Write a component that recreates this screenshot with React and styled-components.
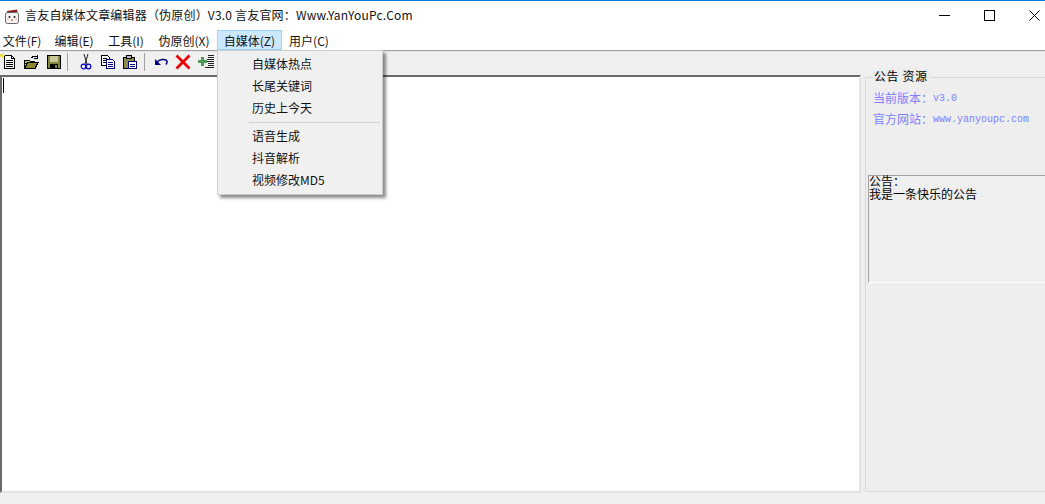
import React from "react";
import styled, { createGlobalStyle } from "styled-components";

const Global = createGlobalStyle`
  html, body { margin: 0; padding: 0; background: #f0f0f0; overflow: hidden; }
  * { box-sizing: border-box; }
`;
const CJK = `"Noto Sans CJK SC", "Noto Sans", sans-serif`;

const Win = styled.div`
  position: relative; width: 1045px; height: 504px; display: flex; flex-direction: column;
  background: #f0f0f0; overflow: hidden; font-family: ${CJK}; font-size: 12px; color: #111;
`;
const TitleBar = styled.div`
  height: 30px; flex: none; background: #fff; border-top: 1px solid #0078d7;
  display: flex; align-items: center; padding-left: 4px;
`;
const AppLogo = styled.svg` width: 16px; height: 16px; flex: none; margin-right: 5px; `;
const TitleText = styled.div` flex: 1; font-size: 12px; line-height: 16px; letter-spacing: 0.19px; white-space: nowrap; margin-top: -2px; `;
const WinButtons = styled.div` display: flex; align-self: stretch; gap: 24px; `;
const WinBtn = styled.div` width: 21px; display: flex; align-items: center; justify-content: center; `;

const MenuBar = styled.div`
  height: 20px; flex: none; background: #fff; display: flex; align-items: stretch; padding-left: 3px;
`;
const MenuItem = styled.div`
  display: flex; align-items: center; justify-content: center; white-space: nowrap; font-size: 12px;
  width: ${p => p.$w}px; margin-left: ${p => p.$ml || 0}px;
  border: 1px solid ${p => (p.$active ? "#99d1ff" : "transparent")};
  background: ${p => (p.$active ? "#cce8ff" : "transparent")};
`;
const Rule = styled.div` height: 2px; flex: none; background: linear-gradient(#a0a0a0 0 1px, #e3e3e3 1px); `;

const Toolbar = styled.div`
  height: 23px; flex: none; display: flex; align-items: center; padding-bottom: 3px; background: #f0f0f0;
`;
const Tool = styled.svg` width: 16px; height: 16px; flex: none; margin-right: ${p => p.$mr ?? 7}px; `;
const Sep = styled.div`
  width: 1px; height: 18px; background: #a0a0a0; flex: none; margin-right: ${p => p.$mr}px;
`;

const Body = styled.div` flex: 1; display: flex; min-height: 0; `;
const Editor = styled.div`
  width: 861px; height: 418px; flex: none; background: #fff; position: relative;
  border-top: 2px solid #696969; border-left: 2px solid #696969;
  border-right: 2px solid #e3e3e3; border-bottom: 2px solid #e3e3e3;
  padding: 1px 0 0 1px;
`;
const Caret = styled.div` width: 1px; height: 15px; background: #000; `;

const Panel = styled.div` flex: 1; padding: 2px 0 0 4px; background: #eee; height: 417px; `;
const Group = styled.div`
  position: relative; height: 415px; margin-right: -4px; background: #eeeeee;
  border: 1px solid #d9d9d9; padding: 9px 0 0 7px;
`;
const Legend = styled.div`
  position: absolute; top: -10px; left: 6px; padding: 0 2px; background: #eee; color: #000;
  font-size: 12px; line-height: 16px; letter-spacing: 0.6px; white-space: nowrap;
`;
const InfoRow = styled.div`
  height: 21px; display: flex; align-items: center; color: #8080ff; white-space: nowrap;
`;
const Mono = styled.span` font-family: "Liberation Mono", monospace; font-size: 10px; position: relative; top: 1px; `;
const Notice = styled.div`
  margin: 46px 0 0 -5px; height: 108px; font-size: 12px; color: #000;
  border-top: 1px solid #a0a0a0; border-left: 1px solid #a0a0a0;
  border-bottom: 1px solid #fff; background: #efefef;
`;
const NoticeText = styled.div` margin-top: -2px; line-height: 13px; `;

const Dropdown = styled.div`
  position: absolute; left: 217px; top: 50px; width: 166px; height: 145px; padding: 2px;
  background: #f0f0f0; border: 1px solid #ccc; box-shadow: 3px 3px 3px rgba(0,0,0,.45);
`;
const DropItem = styled.div` height: 22px; padding-left: 32px; line-height: 22px; color: #111; font-size: 12px; white-space: nowrap; `;
const DropSep = styled.div` height: 1px; background: #d2d2d2; margin: 3px 0 2px 29px; `;

const Logo = () => (
  <AppLogo viewBox="0 0 16 16">
    <path d="M3 3 L13 1.5 L13.5 4 L3.5 5 Z" fill="#8e1f1f" />
    <rect x="1.5" y="4.5" width="13" height="11" rx="2" fill="#f8f2f2" stroke="#444" strokeWidth=".8" />
    <circle cx="5.5" cy="9" r="1" fill="#222" /><circle cx="10.5" cy="9" r="1" fill="#222" />
    <circle cx="3.8" cy="11" r="1" fill="#f5b5c0" /><circle cx="12.2" cy="11" r="1" fill="#f5b5c0" />
    <path d="M7 12h2" stroke="#c33" />
  </AppLogo>
);

const IconNew = () => (
  <Tool viewBox="0 0 16 16" $mr={7} shapeRendering="crispEdges">
    <path d="M4.5 1.5h7l3 3v10h-10z" fill="#fff" stroke="#000" />
    <path d="M11.5 1.5v3h3M6 6.5h7M6 8.5h7M6 10.5h7M6 12.5h7" fill="none" stroke="#000" />
    <path d="M0 1.5h5M2.5 0v4M0 0l4 3M0 3l4-3" stroke="#e8e04a" />
  </Tool>
);
const IconOpen = () => (
  <Tool viewBox="0 0 16 16" $mr={7} shapeRendering="crispEdges">
    <path d="M1.5 6.5h5l1 1h4v2h-10zM1.5 14.5v-8" fill="#c8b850" stroke="#000" />
    <path d="M1.5 14.5l3-6h10.5l-3 6z" fill="#8d8a2c" stroke="#000" />
    <path d="M8.5 4.5c1-3 4-3 5.5-1.5M14.5 1v3.5h-3.5" fill="none" stroke="#000" />
  </Tool>
);
const IconSave = () => (
  <Tool viewBox="0 0 16 16" $mr={5} shapeRendering="crispEdges">
    <rect x="1" y="1" width="14" height="14" fill="#000" />
    <rect x="2" y="2" width="12" height="12" fill="#85853c" />
    <rect x="4" y="2" width="8" height="6" fill="#c8c89a" />
    <rect x="4" y="10" width="8" height="5" fill="#000" />
    <rect x="9" y="11" width="2" height="3" fill="#85853c" />
  </Tool>
);
const IconCut = () => (
  <Tool viewBox="0 0 16 16" $mr={6}>
    <path d="M6 0l3 10M10 0L7 10" stroke="#222" strokeWidth="1" fill="none" />
    <circle cx="5.5" cy="12.5" r="2.3" fill="none" stroke="#0000c8" strokeWidth="1.2" />
    <circle cx="10.5" cy="12.5" r="2.3" fill="none" stroke="#0000c8" strokeWidth="1.2" />
  </Tool>
);
const IconCopy = () => (
  <Tool viewBox="0 0 16 16" $mr={6} shapeRendering="crispEdges">
    <path d="M1.5 1.5h6l2 2v8h-8z" fill="#fff" stroke="#000" />
    <path d="M3 4.5h4M3 6.5h4M3 8.5h4" stroke="#000" />
    <path d="M6.5 5.5h6l2 2v7h-8z" fill="#fff" stroke="#000080" />
    <path d="M8 8.5h5M8 10.5h5M8 12.5h5" stroke="#000080" />
  </Tool>
);
const IconPaste = () => (
  <Tool viewBox="0 0 16 16" $mr={6} shapeRendering="crispEdges">
    <path d="M1.5 3.5h11v11h-11z" fill="#8f8a4e" stroke="#000" />
    <path d="M4.5 1.5h5v3h-5z" fill="#bbb" stroke="#000" />
    <path d="M6.5 7.5h8v7h-8z" fill="#fff" stroke="#000080" />
    <path d="M8 10.5h5M8 12.5h5" stroke="#000080" />
  </Tool>
);
const IconUndo = () => (
  <Tool viewBox="0 0 16 16" $mr={6}>
    <path d="M2 5v6h6z" fill="#000080" />
    <path d="M4 8c3-3 7-3 9-2 1.5 1 1 3 0 4.5" fill="none" stroke="#000080" strokeWidth="1.5" />
  </Tool>
);
const IconDelete = () => (
  <Tool viewBox="0 0 16 16" $mr={7}>
    <path d="M1.5 1.5l13 13M14.5 1.5l-13 13" stroke="#e80000" strokeWidth="2.8" />
  </Tool>
);
const IconAdd = () => (
  <Tool viewBox="0 0 16 16" $mr={0} shapeRendering="crispEdges">
    <path d="M3 3h3v3h3v3H6v3H3V9H0V6h3z" fill="#4f9a5a" />
    <path d="M10 1.5h6M10 3.5h6M9 5.5h7M9 7.5h7M10 9.5h6M10 11.5h6M7 13.5h9" stroke="#222" />
  </Tool>
);

export default function App() {
  return (
    <Win>
      <Global />
      <TitleBar>
        <Logo />
        <TitleText>言友自媒体文章编辑器（伪原创）V3.0 言友官网：Www.YanYouPc.Com</TitleText>
        <WinButtons>
          <WinBtn>
            <svg width="11" height="11" viewBox="0 0 11 11"><path d="M0 5.5h11" stroke="#000" /></svg>
          </WinBtn>
          <WinBtn>
            <svg width="11" height="11" viewBox="0 0 11 11"><rect x=".5" y=".5" width="10" height="10" fill="none" stroke="#000" /></svg>
          </WinBtn>
          <WinBtn>
            <svg width="11" height="11" viewBox="0 0 11 11"><path d="M.5.5l10 10M10.5.5l-10 10" stroke="#000" /></svg>
          </WinBtn>
        </WinButtons>
      </TitleBar>
      <MenuBar>
        <MenuItem $w={38}>文件(F)</MenuItem>
        <MenuItem $w={38} $ml={14}>编辑(E)</MenuItem>
        <MenuItem $w={36} $ml={15}>工具(I)</MenuItem>
        <MenuItem $w={52} $ml={14}>伪原创(X)</MenuItem>
        <MenuItem $w={65} $ml={7} $active>自媒体(Z)</MenuItem>
        <MenuItem $w={40} $ml={7}>用户(C)</MenuItem>
      </MenuBar>
      <Rule />
      <Toolbar>
        <IconNew />
        <IconOpen />
        <IconSave />
        <Sep $mr={10} />
        <IconCut />
        <IconCopy />
        <IconPaste />
        <Sep $mr={8} />
        <IconUndo />
        <IconDelete />
        <IconAdd />
      </Toolbar>
      <Body>
        <Editor><Caret /></Editor>
        <Panel>
          <Group>
            <Legend>公告 资源</Legend>
            <InfoRow>当前版本：<Mono>v3.0</Mono></InfoRow>
            <InfoRow>官方网站：<Mono>www.yanyoupc.com</Mono></InfoRow>
            <Notice><NoticeText>公告：<br />我是一条快乐的公告</NoticeText></Notice>
          </Group>
        </Panel>
      </Body>
      <Dropdown>
        <DropItem>自媒体热点</DropItem>
        <DropItem>长尾关键词</DropItem>
        <DropItem>历史上今天</DropItem>
        <DropSep />
        <DropItem>语音生成</DropItem>
        <DropItem>抖音解析</DropItem>
        <DropItem>视频修改MD5</DropItem>
      </Dropdown>
    </Win>
  );
}
